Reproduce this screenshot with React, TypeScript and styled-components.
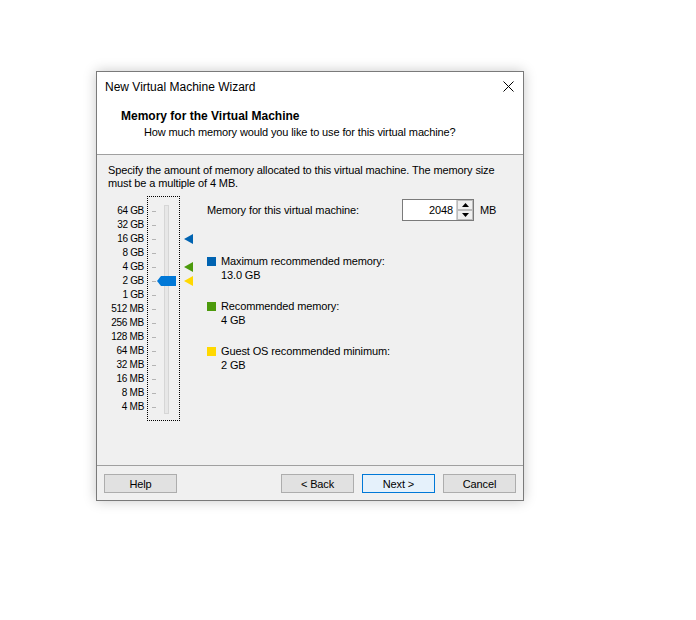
import styled, { createGlobalStyle } from "styled-components";

const GlobalStyle = createGlobalStyle`
    html, body {
        margin: 0;
        padding: 0;
        background: #ffffff;
    }
    body {
        font-family: "Liberation Sans", Arial, sans-serif;
        font-size: 11px;
        letter-spacing: -0.12px;
        color: #000000;
    }
`;

const SIZES = [
    "64 GB", "32 GB", "16 GB", "8 GB", "4 GB", "2 GB", "1 GB",
    "512 MB", "256 MB", "128 MB", "64 MB", "32 MB", "16 MB", "8 MB", "4 MB",
];

const ROW = 14;
const MAX_ROW = 2; // 16 GB
const REC_ROW = 4; // 4 GB
const MIN_ROW = 5; // 2 GB
const VALUE_ROW = 5;

const BLUE = "#0063b1";
const GREEN = "#4c9a0c";
const YELLOW = "#ffd800";

const markers: Record<number, string> = {
    [MAX_ROW]: BLUE,
    [REC_ROW]: GREEN,
    [MIN_ROW]: YELLOW,
};

const App = () => {
    return (
        <>
            <GlobalStyle />
            <Page>
                <Window>
                    <Header>
                        <TitleBar>
                            <Title>New Virtual Machine Wizard</Title>
                            <CloseButton aria-label="close">
                                <svg width="11" height="11" viewBox="0 0 11 11">
                                    <path d="M0.5 0.5 L10.5 10.5 M10.5 0.5 L0.5 10.5" stroke="#000" strokeWidth="1" />
                                </svg>
                            </CloseButton>
                        </TitleBar>
                        <Heading>Memory for the Virtual Machine</Heading>
                        <Subheading>How much memory would you like to use for this virtual machine?</Subheading>
                    </Header>

                    <Body>
                        <Intro>
                            Specify the amount of memory allocated to this virtual machine. The memory size
                            <br />
                            must be a multiple of 4 MB.
                        </Intro>

                        <Main>
                            <SliderArea>
                                <Labels>
                                    {SIZES.map((s) => (
                                        <Label key={s}>{s}</Label>
                                    ))}
                                </Labels>
                                <SliderBox>
                                    <Ticks>
                                        {SIZES.map((s) => (
                                            <TickRow key={s}>
                                                <Tick />
                                            </TickRow>
                                        ))}
                                    </Ticks>
                                    <Track />
                                    <Thumb style={{ top: 7 + VALUE_ROW * ROW + 2 }}>
                                        <svg width="19" height="10" viewBox="0 0 19 10">
                                            <path d="M0 5 L4 0 H19 V10 H4 Z" fill="#0078d7" />
                                        </svg>
                                    </Thumb>
                                </SliderBox>
                                <Markers>
                                    {SIZES.map((s, i) => (
                                        <MarkerRow key={s}>
                                            {markers[i] && (
                                                <svg width="9" height="10" viewBox="0 0 9 10">
                                                    <path d="M0 5 L9 0 V10 Z" fill={markers[i]} />
                                                </svg>
                                            )}
                                        </MarkerRow>
                                    ))}
                                </Markers>
                            </SliderArea>

                            <Settings>
                                <MemoryRow>
                                    <MemoryLabel>Memory for this virtual machine:</MemoryLabel>
                                    <SpinBox>
                                        <SpinInput>2048</SpinInput>
                                        <SpinButtons>
                                            <SpinButton>
                                                <svg width="7" height="4" viewBox="0 0 7 4">
                                                    <path d="M3.5 0 L7 4 H0 Z" fill="#000" />
                                                </svg>
                                            </SpinButton>
                                            <SpinButton>
                                                <svg width="7" height="4" viewBox="0 0 7 4">
                                                    <path d="M0 0 H7 L3.5 4 Z" fill="#000" />
                                                </svg>
                                            </SpinButton>
                                        </SpinButtons>
                                    </SpinBox>
                                    <Unit>MB</Unit>
                                </MemoryRow>

                                <Legend>
                                    <LegendItem>
                                        <Swatch $color={BLUE} />
                                        <LegendText>
                                            <div>Maximum recommended memory:</div>
                                            <div>13.0 GB</div>
                                        </LegendText>
                                    </LegendItem>
                                    <LegendItem>
                                        <Swatch $color={GREEN} />
                                        <LegendText>
                                            <div>Recommended memory:</div>
                                            <div>4 GB</div>
                                        </LegendText>
                                    </LegendItem>
                                    <LegendItem>
                                        <Swatch $color={YELLOW} />
                                        <LegendText>
                                            <div>Guest OS recommended minimum:</div>
                                            <div>2 GB</div>
                                        </LegendText>
                                    </LegendItem>
                                </Legend>
                            </Settings>
                        </Main>
                    </Body>

                    <Footer>
                        <Button>Help</Button>
                        <Spacer />
                        <Button>&lt; Back</Button>
                        <Button $primary>Next &gt;</Button>
                        <Button>Cancel</Button>
                    </Footer>
                </Window>
            </Page>
        </>
    );
};

const Page = styled.div`
    width: 696px;
    height: 620px;
    padding: 71px 0 0 96px;
    box-sizing: border-box;
`;

const Window = styled.div`
    width: 428px;
    height: 430px;
    box-sizing: border-box;
    border: 1px solid #7a7a7a;
    background: #f0f0f0;
    display: flex;
    flex-direction: column;
    box-shadow: 0 0 12px rgba(0, 0, 0, 0.22);
`;

const Header = styled.div`
    background: #ffffff;
    height: 82px;
    border-bottom: 1px solid #a0a0a0;
    display: flex;
    flex-direction: column;
`;

const TitleBar = styled.div`
    height: 30px;
    display: flex;
    align-items: center;
    justify-content: space-between;
    padding: 0 9px 0 8px;
`;

const Title = styled.span`
    font-size: 12px;
    letter-spacing: 0;
    line-height: 16px;
`;

const CloseButton = styled.div`
    width: 11px;
    height: 11px;
    display: flex;
    margin-top: -2px;
`;

const Heading = styled.div`
    font-size: 12px;
    letter-spacing: 0;
    font-weight: bold;
    line-height: 16px;
    margin: 6px 0 0 24px;
`;

const Subheading = styled.div`
    line-height: 16px;
    margin-left: 47px;
`;

const Body = styled.div`
    flex: 1;
    display: flex;
    flex-direction: column;
    padding: 9px 11px 0 11px;
    border-bottom: 1px solid #a0a0a0;
`;

const Intro = styled.div`
    line-height: 13px;
    white-space: nowrap;
`;

const Main = styled.div`
    display: flex;
    margin-top: 6px;
`;

const SliderArea = styled.div`
    display: flex;
    align-items: flex-start;
`;

const Labels = styled.div`
    width: 36px;
    padding-top: 8px;
    margin-right: 3px;
    display: flex;
    flex-direction: column;
`;

const Label = styled.div`
    height: ${ROW}px;
    line-height: ${ROW}px;
    text-align: right;
    white-space: nowrap;
    font-size: 10px;
    letter-spacing: -0.3px;
`;

const SliderBox = styled.div`
    position: relative;
    width: 33px;
    height: 225px;
    box-sizing: border-box;
    border: 1px dotted #000000;
    padding-top: 7px;
`;

const Ticks = styled.div`
    display: flex;
    flex-direction: column;
    padding-left: 4px;
`;

const TickRow = styled.div`
    height: ${ROW}px;
    display: flex;
    align-items: center;
`;

const Tick = styled.div`
    width: 4px;
    height: 1px;
    background: #b4b4b4;
`;

const Track = styled.div`
    position: absolute;
    left: 16px;
    top: 8px;
    width: 3px;
    height: 207px;
    background: #e7e7e7;
    border: 1px solid #d6d6d6;
`;

const Thumb = styled.div`
    position: absolute;
    left: 9px;
    display: flex;
`;

const Markers = styled.div`
    display: flex;
    flex-direction: column;
    padding-top: 8px;
    margin-left: 4px;
    width: 9px;
`;

const MarkerRow = styled.div`
    height: ${ROW}px;
    display: flex;
    align-items: center;
`;

const Settings = styled.div`
    display: flex;
    flex-direction: column;
    margin-left: 14px;
    padding-top: 3px;
`;

const MemoryRow = styled.div`
    display: flex;
    align-items: center;
    height: 22px;
`;

const MemoryLabel = styled.span`
    width: 195px;
`;

const SpinBox = styled.div`
    display: flex;
    width: 72px;
    height: 22px;
    box-sizing: border-box;
    border: 1px solid #7a7a7a;
    background: #ffffff;
`;

const SpinInput = styled.div`
    flex: 1;
    text-align: right;
    line-height: 20px;
    padding-right: 3px;
`;

const SpinButtons = styled.div`
    width: 16px;
    display: flex;
    flex-direction: column;
    border-left: 1px solid #d0d0d0;
`;

const SpinButton = styled.div`
    flex: 1;
    display: flex;
    align-items: center;
    justify-content: center;
    background: #f0f0f0;
    border: 1px solid #bcbcbc;
`;

const Unit = styled.span`
    margin-left: 6px;
`;

const Legend = styled.div`
    display: flex;
    flex-direction: column;
    gap: 17px;
    margin-top: 33px;
`;

const LegendItem = styled.div`
    display: flex;
    align-items: flex-start;
`;

const Swatch = styled.div<{ $color: string }>`
    width: 9px;
    height: 9px;
    margin-top: 3px;
    margin-right: 5px;
    background: ${(p) => p.$color};
`;

const LegendText = styled.div`
    line-height: 14px;
`;

const Footer = styled.div`
    height: 34px;
    display: flex;
    align-items: flex-start;
    gap: 8px;
    padding: 8px 7px 0 7px;
    box-sizing: border-box;
`;

const Spacer = styled.div`
    flex: 1;
`;

const Button = styled.div<{ $primary?: boolean }>`
    width: 73px;
    height: 19px;
    box-sizing: border-box;
    display: flex;
    align-items: center;
    justify-content: center;
    background: ${(p) => (p.$primary ? "#e5f1fb" : "#e1e1e1")};
    border: 1px solid ${(p) => (p.$primary ? "#0078d7" : "#adadad")};
`;

export default App;
